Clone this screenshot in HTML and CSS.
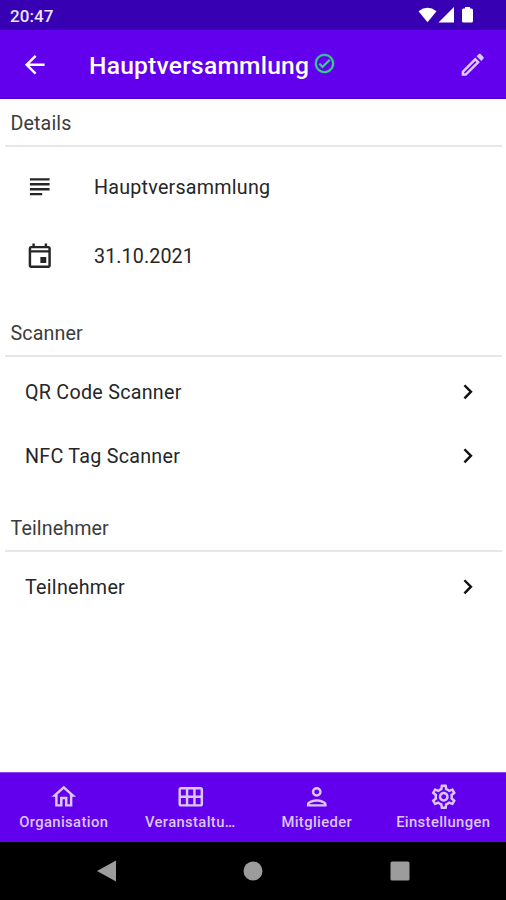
FILE: index.html
```html
<!DOCTYPE html>
<html lang="de">
<head>
<meta charset="utf-8">
<title>Hauptversammlung</title>
<link rel="stylesheet" href="styles.css">
</head>
<body>
<div class="screen">
  <div class="status">
    <span class="time">20:47</span>
    <svg class="status-icons" width="58" height="18" viewBox="0 0 58 18" fill="#fff">
      <path d="M0.5 4.2Q9.5-2.6 18.500 4.200L9.500 15.200Z"/>
      <path d="M36 0v15.500H20.500Z"/>
      <path d="M47 0h5v1.500h1.500q1.500 0 1.500 1.500v11q0 1.500-1.500 1.500h-8q-1.500 0-1.500-1.500v-11q0-1.500 1.500-1.500h1.500Z"/>
    </svg>
  </div>
  <header class="appbar">
    <svg class="icon back" viewBox="0 0 24 24"><path d="M20 11H7.830l5.590-5.590L12 4l-8 8 8 8 1.410-1.410L7.830 13H20v-2z"/></svg>
    <h1 class="title">Hauptversammlung</h1>
    <svg class="check" viewBox="0 0 24 24"><path d="M12 2C6.480 2 2 6.480 2 12s4.480 10 10 10 10-4.480 10-10S17.520 2 12 2zm0 18c-4.410 0-8-3.590-8-8s3.590-8 8-8 8 3.590 8 8-3.590 8-8 8zm4.590-12.420L10 14.170l-2.590-2.580L6 13l4 4 8-8z"/></svg>
    <svg class="icon edit" viewBox="0 0 24 24"><path d="M14.060 9.020l.92.92L5.920 19H5v-.92l9.060-9.060M17.660 3c-.25 0-.51.1-.7.290l-1.830 1.830 3.750 3.750 1.830-1.830c.39-.39.39-1.020 0-1.410l-2.340-2.340c-.2-.2-.45-.29-.71-.29zm-3.600 3.190L3 17.250V21h3.750L17.810 9.940l-3.750-3.750z"/></svg>
  </header>
  <main class="content">
    <section>
      <h2 class="heading">Details</h2>
      <div class="detail">
        <svg class="icon" viewBox="0 0 24 24"><path d="M14 17H4v2h10v-2zm6-8H4v2h16V9zM4 15h16v-2H4v2zM4 5v2h16V5H4z"/></svg>
        <span class="name">Hauptversammlung</span>
      </div>
      <div class="detail">
        <svg class="icon" viewBox="0 0 24 24"><path fill-rule="evenodd" d="M19 4h-1V2h-2v2H8V2H6v2H5c-1.110 0-2 .9-2 2v14c0 1.100.89 2 2 2h14c1.100 0 2-.9 2-2V6c0-1.100-.9-2-2-2zM5 9.300h14V20H5zM5 5.900h14v1.700H5zM12.500 13h4.800v4.800h-4.800z"/></svg>
        <span class="date">31.10.2021</span>
      </div>
    </section>
    <section>
      <h2 class="heading">Scanner</h2>
      <div class="link"><span class="qr">QR Code Scanner</span><svg class="chevron" viewBox="0 0 24 24"><path d="M10 6L8.590 7.410 13.170 12l-4.580 4.590L10 18l6-6z"/></svg></div>
      <div class="link"><span class="nfc">NFC Tag Scanner</span><svg class="chevron" viewBox="0 0 24 24"><path d="M10 6L8.590 7.410 13.170 12l-4.580 4.590L10 18l6-6z"/></svg></div>
    </section>
    <section>
      <h2 class="heading">Teilnehmer</h2>
      <div class="link"><span>Teilnehmer</span><svg class="chevron" viewBox="0 0 24 24"><path d="M10 6L8.590 7.410 13.170 12l-4.580 4.590L10 18l6-6z"/></svg></div>
    </section>
  </main>
  <nav class="tabs">
    <div class="tab"><svg class="icon" viewBox="0 0 24 24"><path d="M12 5.690l5 4.500V18h-2v-6H9v6H7v-7.810l5-4.500M12 3L2 12h3v8h6v-6h2v6h6v-8h3L12 3z"/></svg><span>Organisation</span></div>
    <div class="tab"><svg class="icon" viewBox="0 0 24 24"><path d="M20 4H4c-1.100 0-2 .9-2 2v12c0 1.100.9 2 2 2h16c1.100 0 2-.9 2-2V6c0-1.100-.9-2-2-2zM8 11H4V6h4v5zm6 0h-4V6h4v5zm6 0h-4V6h4v5zM8 18H4v-5h4v5zm6 0h-4v-5h4v5zm6 0h-4v-5h4v5z"/></svg><span>Veranstaltu…</span></div>
    <div class="tab"><svg class="icon" viewBox="0 0 24 24"><path d="M12 6c1.100 0 2 .9 2 2s-.9 2-2 2-2-.9-2-2 .9-2 2-2m0 10c2.700 0 5.800 1.290 6 2H6c.23-.72 3.310-2 6-2m0-12C9.790 4 8 5.790 8 8s1.790 4 4 4 4-1.790 4-4-1.790-4-4-4zm0 10c-2.670 0-8 1.340-8 4v2h16v-2c0-2.660-5.330-4-8-4z"/></svg><span>Mitglieder</span></div>
    <div class="tab"><svg class="icon" viewBox="0 0 24 24"><path d="M19.430 12.980c.04-.32.07-.64.07-.98 0-.34-.03-.66-.07-.98l2.110-1.650c.19-.15.24-.42.12-.64l-2-3.460c-.09-.16-.26-.25-.44-.25-.06 0-.12.010-.17.030l-2.490 1c-.52-.4-1.080-.73-1.690-.98l-.38-2.650C14.460 2.180 14.250 2 14 2h-4c-.25 0-.46.18-.49.42l-.38 2.650c-.61.25-1.170.59-1.690.98l-2.490-1c-.06-.02-.12-.03-.18-.03-.17 0-.34.090-.43.250l-2 3.460c-.13.220-.07.490.12.640l2.110 1.650c-.04.320-.07.650-.07.980 0 .33.030.66.070.98l-2.110 1.650c-.19.150-.24.420-.12.640l2 3.460c.09.160.26.250.44.250.06 0 .12-.01.17-.03l2.490-1c.52.400 1.080.730 1.690.980l.38 2.650c.03.240.24.420.49.420h4c.25 0 .46-.18.49-.42l.38-2.650c.61-.25 1.170-.59 1.690-.98l2.490 1c.06.020.12.030.18.030.17 0 .34-.09.43-.25l2-3.460c.12-.22.07-.49-.12-.64l-2.110-1.650zm-1.980-1.710c.04.310.05.520.05.730 0 .21-.02.430-.05.730l-.14 1.130.89.700 1.080.840-.7 1.210-1.270-.51-1.040-.42-.9.680c-.43.320-.84.560-1.250.730l-1.060.430-.16 1.130-.2 1.350h-1.400l-.19-1.350-.16-1.130-1.060-.43c-.43-.18-.83-.41-1.230-.71l-.91-.7-1.060.430-1.270.510-.7-1.210 1.080-.84.890-.7-.14-1.130c-.03-.31-.05-.54-.05-.74s.02-.43.050-.73l.14-1.130-.89-.7-1.080-.84.700-1.210 1.270.510 1.040.420.900-.68c.43-.32.840-.56 1.250-.73l1.060-.43.160-1.130.2-1.350h1.390l.19 1.350.16 1.130 1.060.430c.43.180.83.410 1.230.710l.91.700 1.060-.43 1.270-.51.700 1.210-1.070.850-.89.700.14 1.130zM12 8c-2.210 0-4 1.790-4 4s1.790 4 4 4 4-1.790 4-4-1.790-4-4-4zm0 6c-1.100 0-2-.9-2-2s.9-2 2-2 2 .9 2 2-.9 2-2 2z"/></svg><span>Einstellungen</span></div>
  </nav>
  <div class="system">
    <svg width="20" height="22" viewBox="0 0 20 22"><path d="M0 11L19 0.500V21.500Z"/></svg>
    <svg width="20" height="20" viewBox="0 0 20 20"><circle cx="10" cy="10" r="9.500"/></svg>
    <svg width="20" height="20" viewBox="0 0 20 20"><rect x="0.500" y="0.500" width="19" height="19" rx="1.500"/></svg>
  </div>
</div>
</body>
</html>
```
FILE: styles.css
```css
* { box-sizing: border-box; }
body { margin: 0; font-family: Roboto, "Liberation Sans", sans-serif; color: #262626; background: #fff; }
svg { display: block; flex: none; }
h1, h2 { margin: 0; }
.screen { width: 506px; height: 900px; display: flex; flex-direction: column; overflow: hidden; }
.status { height: 30px; flex: none; background: #3700b3; color: #eee5fb; display: flex; align-items: center; justify-content: space-between; padding: 2px 30px 0 10px; }
.time { font-size: 17px; font-weight: 500; letter-spacing: 0.1px; }
.status-icons { margin-top: -1px; }
.appbar { height: 69px; flex: none; background: #6200ee; border-bottom: 1px solid #5000cc; display: flex; align-items: center; padding: 2px 19px 0 20px; }
.icon { width: 29.5px; height: 29.5px; fill: currentColor; }
.back { color: #fff; }
.title { margin: 2px 0 0 39.5px; color: #fff; font-size: 24.6px; font-weight: 500; line-height: 30px; letter-spacing: 0.22px; white-space: nowrap; }
.check { width: 23px; height: 23px; margin: -4px 0 0 4px; fill: #35cf87; stroke: #35cf87; stroke-width: 0.4; }
.edit { margin-left: auto; color: #dfc8fc; }
.content { flex: 1; }
.heading { height: 48px; margin: 0 4px 5px 5px; padding: 0 5.5px; border-bottom: 2px solid #e7e7e7; font-size: 19.7px; font-weight: 400; line-height: 49px; letter-spacing: 0.1px; color: #3c3c3c; }
section + section { padding-top: 19px; }
section + section .heading { margin-bottom: 3px; }
section:last-child { padding-top: 16px; }
.detail { height: 69px; display: flex; align-items: center; padding-left: 25px; gap: 39.5px; font-size: 19.7px; }
.detail span { padding-top: 2px; }
.name { letter-spacing: 0.23px; }
.date { letter-spacing: 0.1px; }
.link { height: 64px; display: flex; align-items: center; justify-content: space-between; padding: 0 24px 0 25px; font-size: 19.7px; letter-spacing: 0.27px; }
.chevron { width: 29.5px; height: 29.5px; fill: #111; }
.tabs { height: 70px; flex: none; background: #6200ee; border-top: 1px solid #8a45f1; display: grid; grid-template-columns: repeat(4, 1fr); color: #dcc5fb; }
.tab { display: flex; flex-direction: column; align-items: center; padding: 9px 0 0 1px; font-size: 14.8px; font-weight: 500; line-height: 20px; letter-spacing: 0.37px; white-space: nowrap; }
.system { height: 58px; flex: none; background: #000; display: flex; align-items: center; justify-content: space-between; padding: 0 96.5px; fill: #9c9c9c; }
```
